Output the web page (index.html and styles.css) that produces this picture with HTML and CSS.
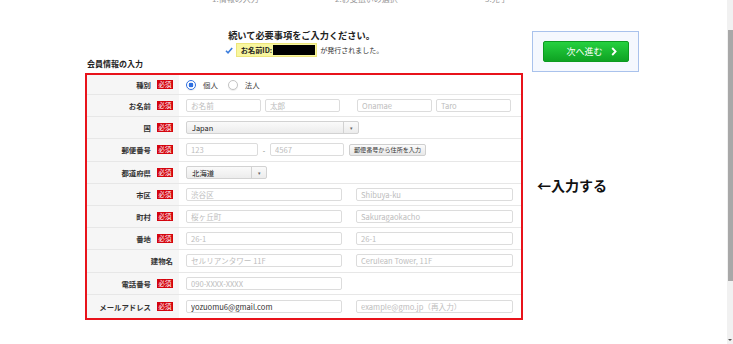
FILE: index.html
```html
<!DOCTYPE html>
<html lang="ja">
<head>
<meta charset="utf-8">
<title>会員情報の入力</title>
<link rel="stylesheet" href="styles.css">
</head>
<body>
<div class="page">
  <div class="main">
    <div class="steps">
      <span class="step s1">1.情報の入力</span>
      <span class="step s2">2.お支払いの選択</span>
      <span class="step">3.完了</span>
    </div>
    <div class="wrap">
      <div class="left">
        <h1 class="lead">続いて必要事項をご入力ください。</h1>
        <div class="notice">
          <svg class="check" width="8" height="7" viewBox="0 0 8 7"><path d="M1 3.8 L3 5.8 L7.2 1" fill="none" stroke="#3b7ddd" stroke-width="1.6"/></svg>
          <span class="idbox"><b>お名前ID:</b><span class="mask"></span></span>
          <span class="issued">が発行されました。</span>
        </div>
        <h2 class="sec">会員情報の入力</h2>
        <div class="form">
          <div class="row first">
            <div class="lab"><span>種別</span><i class="req">必須</i></div>
            <div class="val">
              <span class="radio"><span class="dot on"></span>個人</span>
              <span class="radio"><span class="dot"></span>法人</span>
            </div>
          </div>
          <div class="row">
            <div class="lab"><span>お名前</span><i class="req">必須</i></div>
            <div class="val">
              <input class="in w75" placeholder="お名前">
              <input class="in w75" placeholder="太郎">
              <input class="in w75 sp" placeholder="Onamae">
              <input class="in w75" placeholder="Taro">
            </div>
          </div>
          <div class="row">
            <div class="lab"><span>国</span><i class="req">必須</i></div>
            <div class="val">
              <div class="sel w173"><span class="opt">Japan</span><span class="caret">▾</span></div>
            </div>
          </div>
          <div class="row">
            <div class="lab"><span>郵便番号</span><i class="req">必須</i></div>
            <div class="val">
              <input class="in w72" placeholder="123">
              <span class="dash">-</span>
              <input class="in w74" placeholder="4567">
              <span class="postbtn">郵便番号から住所を入力</span>
            </div>
          </div>
          <div class="row">
            <div class="lab"><span>都道府県</span><i class="req">必須</i></div>
            <div class="val">
              <div class="sel w81"><span class="opt">北海道</span><span class="caret">▾</span></div>
            </div>
          </div>
          <div class="row">
            <div class="lab"><span>市区</span><i class="req">必須</i></div>
            <div class="val">
              <input class="in w156" placeholder="渋谷区">
              <input class="in w157 sp2" placeholder="Shibuya-ku">
            </div>
          </div>
          <div class="row">
            <div class="lab"><span>町村</span><i class="req">必須</i></div>
            <div class="val">
              <input class="in w156" placeholder="桜ヶ丘町">
              <input class="in w157 sp2" placeholder="Sakuragaokacho">
            </div>
          </div>
          <div class="row">
            <div class="lab"><span>番地</span><i class="req">必須</i></div>
            <div class="val">
              <input class="in w156" placeholder="26-1">
              <input class="in w157 sp2" placeholder="26-1">
            </div>
          </div>
          <div class="row">
            <div class="lab"><span>建物名</span></div>
            <div class="val">
              <input class="in w156" placeholder="セルリアンタワー 11F">
              <input class="in w157 sp2" placeholder="Cerulean Tower, 11F">
            </div>
          </div>
          <div class="row">
            <div class="lab"><span>電話番号</span><i class="req">必須</i></div>
            <div class="val">
              <input class="in w156" placeholder="090-XXXX-XXXX">
            </div>
          </div>
          <div class="row last">
            <div class="lab"><span>メールアドレス</span><i class="req">必須</i></div>
            <div class="val">
              <input class="in w156" value="yozuomu6@gmail.com">
              <input class="in w157 sp2" placeholder="example@gmo.jp（再入力）">
            </div>
          </div>
        </div>
      </div>
      <div class="right">
        <div class="btnbox">
          <span class="next">次へ進む<svg width="6" height="9" viewBox="0 0 6 9"><path d="M1.2 1 L4.6 4.5 L1.2 8" fill="none" stroke="#fff" stroke-width="1.8"/></svg></span>
        </div>
        <p class="hint">←入力する</p>
      </div>
    </div>
  </div>
  <div class="scrollbar"><div class="thumb"></div><div class="arrow"></div></div>
</div>
</body>
</html>
```
FILE: styles.css
```css
* { box-sizing: border-box; margin: 0; padding: 0; }
html, body { width: 733px; height: 344px; overflow: hidden; background: #fff; }
body { font-family: "Noto Sans CJK JP", "Noto Sans", sans-serif; color: #333; }

.page { display: flex; height: 344px; }
.main { width: 727px; }

.steps { display: flex; padding-left: 212px; margin-top: -6px; height: 10px; font-size: 8px; line-height: 10px; color: #999; }
.step.s1 { width: 123px; }
.step.s2 { width: 150px; }

.wrap { display: flex; padding-left: 85px; gap: 9px; }
.left { width: 438px; padding-top: 24px; }

.lead { font-size: 9.2px; line-height: 14px; font-weight: bold; text-align: center; color: #222; padding-right: 5px; }

.notice { display: flex; justify-content: center; align-items: center; gap: 2px; height: 14px; margin-top: 1px; font-size: 7px; color: #333; }
.check { margin-right: 1px; }
.idbox { display: flex; align-items: center; height: 14px; padding: 0 1px 0 4px; background: #f8f69e; border: 1px solid #ede57c; font-size: 7.2px; color: #222; }
.mask { display: inline-block; width: 42px; height: 10px; background: #000; margin-left: 1px; }
.issued { margin-left: 1px; }

.sec { font-size: 8px; line-height: 14px; font-weight: bold; padding-left: 2px; color: #222; }

.form { margin-top: 2px; width: 438px; border: 2px solid #e8131b; }
.row { display: flex; height: 22.2px; border-bottom: 1px solid #e7e7e7; }
.row.first { height: 20px; }
.row.last { height: 23px; border-bottom: none; }

.lab { width: 92px; flex: none; background: #f6f6f6; display: flex; justify-content: flex-end; align-items: center; gap: 6px; padding-right: 6px; font-size: 7.4px; font-weight: bold; color: #333; }
.req { font-style: normal; font-weight: normal; background: #d4040e; color: #fff; font-size: 6.4px; width: 16px; height: 9px; display: flex; align-items: center; justify-content: center; }

.val { flex: 1; display: flex; align-items: center; gap: 4px; padding-left: 7px; }

.in { height: 13px; border: 1px solid #dcdcdc; border-radius: 2px; padding: 0 4px; font-family: inherit; font-size: 7.6px; color: #333; background: #fff; outline: none; }
.in::placeholder { color: #bdbdbd; }
.w72 { width: 72px; }
.w74 { width: 74px; }
.w75 { width: 75px; }
.w156 { width: 156px; }
.w157 { width: 157px; }
.sp { margin-left: 13px; }
.sp2 { margin-left: 10px; }
.dash { width: 4px; text-align: center; font-size: 7px; color: #777; }

.sel { height: 13px; display: flex; border: 1px solid #d2d2d2; border-radius: 2px; background: linear-gradient(#fafafa, #ececec); font-size: 7.4px; color: #222; }
.sel .opt { flex: 1; padding-left: 5px; display: flex; align-items: center; }
.sel .caret { width: 15px; border-left: 1px solid #d2d2d2; display: flex; align-items: center; justify-content: center; font-size: 5px; color: #666; }
.w173 { width: 173px; }
.w81 { width: 81px; }

.postbtn { height: 12px; margin-left: 1px; padding: 0 4px; display: flex; align-items: center; border: 1px solid #cfcfcf; border-radius: 2px; background: linear-gradient(#fbfbfb, #e8e8e8); font-size: 6.1px; color: #333; }

.radio { display: flex; align-items: center; gap: 7px; font-size: 7.4px; color: #444; margin-right: 6px; }
.dot { width: 10px; height: 10px; border-radius: 50%; border: 1px solid #c4c4c4; background: #fff; box-shadow: 0 1px 1px rgba(0,0,0,0.08); }
.dot.on { border: 1.5px solid #2f6fe0; background: radial-gradient(circle, #2f6fe0 0 2.3px, #fff 2.6px); }

.right { width: 107px; padding-top: 27px; }
.btnbox { height: 41px; border: 1px solid #a9c2ec; background: #f5f8fe; display: flex; align-items: center; justify-content: center; }
.next { display: flex; align-items: center; justify-content: center; gap: 8px; width: 86px; height: 21px; padding-left: 12px; border-radius: 2px; border: 1px solid #0c9b20; background: linear-gradient(#26d13f, #0ea223); color: #fff; font-size: 9px; }

.hint { margin-top: 105px; padding-left: 5px; font-size: 14px; line-height: 16px; font-weight: bold; color: #111; }

.scrollbar { width: 6px; background: #f1f1f1; display: flex; flex-direction: column; padding-top: 30px; }
.thumb { height: 251px; margin-left: 1px; background: #a8a8a8; }
.arrow { margin-top: auto; margin-bottom: 3px; align-self: center; width: 0; height: 0; border-left: 2px solid transparent; border-right: 2px solid transparent; border-top: 2px solid #555; }
```
